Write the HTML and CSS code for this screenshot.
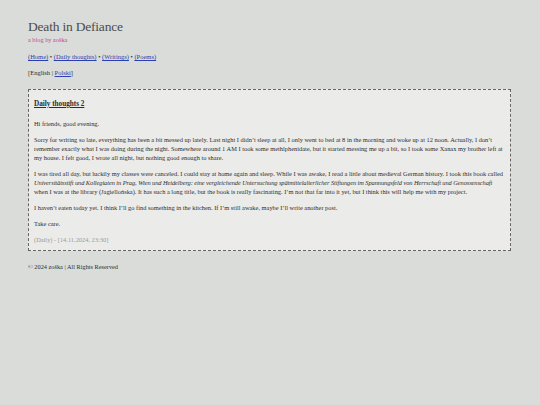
FILE: index.html
```html
<!DOCTYPE html>
<html lang="en">
<head>
<meta charset="utf-8">
<title>Death in Defiance</title>
<link rel="stylesheet" href="styles.css">
</head>
<body>
<header class="site-header">
  <h1 class="site-title">Death in Defiance</h1>
  <div class="site-subtitle">a blog by zoška</div>
  <nav class="site-nav">
    <a href="#">(Home)</a> • <a href="#">(Daily thoughts)</a> • <a href="#">(Writings)</a> • <a href="#">(Poems)</a>
  </nav>
  <div class="lang">[English | <a href="#">Polski</a>]</div>
</header>
<main>
  <article class="post">
    <h2 class="post-title">Daily thoughts 2</h2>
    <p>Hi friends, good evening.</p>
    <p>Sorry for writing so late, everything has been a bit messed up lately. Last night I didn’t sleep at all, I only went to bed at 8 in the morning and woke up at 12 noon. Actually, I don’t remember exactly what I was doing during the night. Somewhere around 1 AM I took some methlphenidate, but it started messing me up a bit, so I took some Xanax my brother left at my house. I felt good, I wrote all night, but nothing good enough to share.</p>
    <p>I was tired all day, but luckily my classes were canceled. I could stay at home again and sleep. While I was awake, I read a little about medieval German history. I took this book called <em class="book">Universitätsstift und Kollegiaten in Prag, Wien und Heidelberg: eine vergleichende Untersuchung spätmittelalterlicher Stiftungen im Spannungsfeld von Herrschaft und Genossenschaft</em> when I was at the library (Jagiellońska). It has such a long title, but the book is really fascinating. I’m not that far into it yet, but I think this will help me with my project.</p>
    <p>I haven’t eaten today yet. I think I’ll go find something in the kitchen. If I’m still awake, maybe I’ll write another post.</p>
    <p>Take care.</p>
    <p class="post-meta">(Daily) - [14.11.2024, 23:30]</p>
  </article>
</main>
<footer class="site-footer">© 2024 zoška | All Rights Reserved</footer>
</body>
</html>
```
FILE: styles.css
```css
html { background: #d9dcd8; }
body {
  margin: 0;
  padding: 17px 29px 20px 28px;
  font-family: "Liberation Serif", "DejaVu Serif", serif;
  color: #2e2e2e;
  font-size: 6.4px;
  line-height: 9px;
}
a { color: #2a3fb0; text-decoration: underline; }
.site-title {
  margin: 0;
  font-weight: normal;
  font-size: 13.5px;
  line-height: 19px;
  color: #4a4d4e;
  letter-spacing: -0.2px;
}
.site-subtitle {
  color: #c0478f;
  font-size: 6.3px;
  line-height: 8px;
}
.site-nav {
  margin-top: 8px;
  font-size: 6.5px;
  line-height: 9px;
}
.lang {
  margin-top: 7px;
  font-size: 6.5px;
  line-height: 9px;
}
.post {
  margin-top: 12px;
  border: 1px dashed #666;
  background: #ebebe9;
  padding: 6px 5px 6px 5px;
}
.post-title {
  margin: 3px 0 10px;
  font-size: 7.2px;
  line-height: 10px;
  font-weight: bold;
  text-decoration: underline;
}
.post p { margin: 0 0 7px; }
.post .book { letter-spacing: -0.08px; }
.post p.post-meta { color: #9a9a9a; margin: 0; }
.site-footer {
  margin-top: 11px;
  font-size: 6.3px;
  line-height: 9px;
}
```
